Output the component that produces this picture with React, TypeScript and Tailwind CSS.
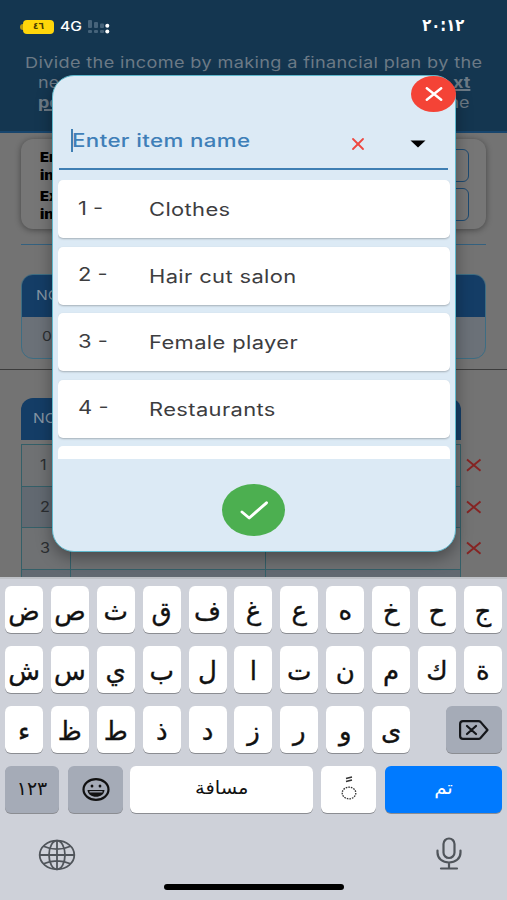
import { X } from 'lucide-react';

const ITEMS = ['Clothes', 'Hair cut salon', 'Female player', 'Restaurants'];

const KEY_ROWS = [
  ['ض', 'ص', 'ث', 'ق', 'ف', 'غ', 'ع', 'ه', 'خ', 'ح', 'ج'],
  ['ش', 'س', 'ي', 'ب', 'ل', 'ا', 'ت', 'ن', 'م', 'ك', 'ة'],
];
const LAST_ROW = ['ء', 'ظ', 'ط', 'ذ', 'د', 'ز', 'ر', 'و', 'ى'];

function StatusBar() {
  return (
    <div className="flex h-[53px] items-start justify-between pl-5 pr-[43px] pt-[19px] text-white">
      <div className="flex h-4 items-center">
        <span className="h-1.5 w-[3px] rounded-l-full bg-[#b79a10]" />
        <span className="flex h-[14px] w-[31px] items-center justify-center rounded bg-[#ffd60a] font-['DejaVu_Sans',sans-serif] text-[9px] font-bold text-[#4a3c00]">
          ٤٦
        </span>
        <span className="ml-[6px] w-[22px] origin-left scale-x-[1.2] text-[13px] font-medium">4G</span>
        <svg className="ml-[6px]" width="22" height="14" viewBox="0 0 22 14">
          <g fill="#46637a">
            <rect x="0" y="0" width="4" height="8" rx="1" />
            <rect x="6" y="2" width="4" height="6" rx="1" />
            <rect x="12" y="3.500" width="4" height="4.500" rx="1" />
            <rect x="0" y="10" width="4" height="3" rx="1" />
            <rect x="6" y="10" width="4" height="3" rx="1" />
            <rect x="12" y="10" width="4" height="3" rx="1" />
          </g>
          <g fill="#fff">
            <circle cx="19.300" cy="5.800" r="2" />
            <circle cx="19.300" cy="11.500" r="2" />
          </g>
        </svg>
      </div>
      <span className="origin-right scale-x-[0.87] font-['DejaVu_Sans',sans-serif] text-[17px] font-bold leading-[13px]">
        ٢٠:١٢
      </span>
    </div>
  );
}

function Budget() {
  return (
    <div className="h-[577px] overflow-hidden bg-[#737373]">
      <header className="h-[133px] border-b-2 border-[#17456d] bg-[#143650]">
        <StatusBar />
        <div className="text-[15px] leading-5 text-[#6c7a86]">
          <p className="ml-[25px] w-max origin-left scale-x-[1.207] tracking-[0.3px]">
            Divide the income by making a financial plan by the
          </p>
          <div className="flex justify-between pl-[38px] pr-[37px]">
            <span className="origin-left scale-x-[1.2]">ne</span>
            <span className="origin-right scale-x-[1.2] font-bold underline decoration-2">xt</span>
          </div>
          <div className="flex justify-between pl-[38px] pr-[37px]">
            <span className="origin-left scale-x-[1.2] font-bold underline decoration-2">pe</span>
            <span className="origin-right scale-x-[1.2]">ne</span>
          </div>
        </div>
      </header>

      <section className="mx-[21px] mt-[6px] flex h-[90px] justify-between rounded-xl bg-[#767676] pl-[19px] pr-[17px] pt-[9px] shadow-[0_1px_6px_rgba(0,0,0,0.4)]">
        <div className="origin-left scale-x-[1.12] text-[13px] font-black leading-[18px] text-black">
          <p>En</p>
          <p>in</p>
          <p className="mt-[3px]">Ex</p>
          <p>in</p>
        </div>
        <div className="flex flex-col gap-[6px] pt-px">
          <div className="h-[33px] w-20 rounded-[6px] border border-[#1d4a70]" />
          <div className="h-[33px] w-20 rounded-[6px] border border-[#1d4a70]" />
        </div>
      </section>

      <div className="mx-[21px] mt-[15px] h-px bg-[#34617f]" />

      <section className="mx-[21px] mt-[29px] h-[85px] overflow-hidden rounded-xl border border-[#3d6d83] bg-[#6b7178] text-[13px]">
        <div className="h-[42px] bg-[#143d66] pl-[14px] leading-[41px] text-[#8494a3]">
          <span className="inline-block origin-left scale-x-[1.2]">NO</span>
        </div>
        <p className="pl-[20px] leading-[39px] text-[#2b2e31]">
          <span className="inline-block origin-left scale-x-[1.2]">0</span>
        </p>
      </section>

      <div className="mt-[10px] h-px bg-[#3c3c3c]" />

      <div className="flex">
        <section className="ml-[21px] mt-[28px] w-[440px] text-[14px]">
          <div className="h-[42px] rounded-t-xl bg-[#143d66] pl-[12px] text-[13px] leading-[41px] text-[#8494a3]">
            <span className="inline-block origin-left scale-x-[1.2]">NO</span>
          </div>
          <div className="mt-1 border-x border-t border-[#345f68]">
            {['1', '2', '3', ''].map((n, i) => (
              <div
                key={i}
                className={`grid h-[41.5px] grid-cols-[49px_195px_1fr] divide-x divide-[#345f68] border-b border-[#345f68] ${
                  i % 2 ? 'bg-[#626971]' : 'bg-[#6f7173]'
                }`}
              >
                <span className="pl-[18px] leading-[40px] text-[#2b2e31]">
                  <span className="inline-block origin-left scale-x-[1.16]">{n}</span>
                </span>
                <span />
                <span />
              </div>
            ))}
          </div>
        </section>
        <div className="ml-[4px] mt-[86px] flex flex-col gap-[23.5px] text-[#862423]">
          {[1, 2, 3].map(n => (
            <svg key={n} width="18" height="18" viewBox="0 0 18 18" fill="none" stroke="currentColor" strokeWidth="1.900">
              <path d="M2 3.500 15.500 14.700M15.500 3.500 2 14.700" />
            </svg>
          ))}
        </div>
      </div>
    </div>
  );
}

function ItemDialog() {
  return (
    <div className="absolute left-[52px] top-[75px] flex h-[477px] w-[404px] flex-col rounded-[22px] border border-[#5fb8cc] bg-[#dceaf5] px-[5px] shadow-[0_6px_16px_rgba(0,0,0,0.35)]">
      <button className="absolute -right-px top-0 flex h-[36px] w-[45px] items-center justify-center rounded-[50%] bg-[#f44336] text-white">
        <svg width="18" height="14" viewBox="0 0 18 14" fill="none" stroke="currentColor" strokeWidth="2.400" strokeLinecap="round">
          <path d="M1.800 1.200 16.200 12.800M16.200 1.200 1.800 12.800" />
        </svg>
      </button>

      <div className="ml-px mr-[2px] flex h-[94px] items-center border-b-2 border-[#3f7fb3] pl-[12px] pt-[37px]">
        <span className="h-[23px] w-[2px] bg-[#3f7fb3]" />
        <span className="w-[275px] whitespace-nowrap">
          <span className="-ml-px inline-block origin-left scale-x-[1.24] text-[18px] font-medium tracking-[0.3px] text-[#3f7fb8]">
            Enter item name
          </span>
        </span>
        <X className="mt-[7px] h-[20px] w-[20px] text-[#ee4840]" strokeWidth={2.2} />
        <svg className="ml-[42px] mt-[7px]" width="16" height="8" viewBox="0 0 16 8">
          <path d="M.5 .5h15L8 7.500z" />
        </svg>
      </div>

      <div className="mt-[10px] flex h-[279px] flex-col gap-[8.5px] overflow-hidden">
        {ITEMS.map((item, i) => (
          <div
            key={item}
            className="flex h-[58px] shrink-0 items-center rounded-[5px] bg-white pl-5 text-[18px] text-[#3d3d3f] shadow-[0_1px_2px_rgba(0,0,0,0.25)]"
          >
            <span className="w-[71px] pb-[2px]">
              <span className="inline-block origin-left scale-x-[1.22]">{i + 1} -</span>
            </span>
            <span className="inline-block origin-left scale-x-[1.218] pt-px tracking-[0.3px]">{item}</span>
          </div>
        ))}
        <div className="h-[58px] shrink-0 rounded-[5px] bg-white" />
      </div>

      <button className="ml-[164px] mt-[25px] flex h-[52px] w-[63px] items-center justify-center rounded-[50%] bg-[#4caf50] text-white">
        <svg width="30" height="20" viewBox="0 0 30 20" fill="none" stroke="currentColor" strokeWidth="2.900" strokeLinecap="round" strokeLinejoin="round">
          <path d="M3 12 10.200 18 27.500 2.800" />
        </svg>
      </button>
    </div>
  );
}

function Key({ label }: { label: string }) {
  return (
    <button className="flex h-[47px] w-[38px] items-center justify-center rounded-[6px] bg-white pt-[2px] font-['DejaVu_Sans',sans-serif] text-[26px] leading-none text-[#111] shadow-[0_1px_0_#8b8d92] [-webkit-text-stroke:0.35px_#111]">
      {label}
    </button>
  );
}

function Keyboard() {
  return (
    <div className="h-[323px] border-t-2 border-[#bfc2c7] bg-[#ced1d9] px-[5px] pt-[7px]">
      <div className="flex flex-col gap-[13px]">
        {KEY_ROWS.map((row, i) => (
          <div key={i} className="flex justify-between">
            {row.map(k => <Key key={k} label={k} />)}
          </div>
        ))}
        <div className="flex justify-between">
          <div className="flex gap-[7.900px]">
            {LAST_ROW.map(k => <Key key={k} label={k} />)}
          </div>
          <button className="flex h-[47px] w-[56px] items-center justify-center rounded-[6px] bg-[#a5abb7] text-[#15171b] shadow-[0_1px_0_#8b8d92]">
            <svg width="30" height="20" viewBox="0 0 30 20" fill="none" stroke="currentColor" strokeWidth="2.200" strokeLinecap="round" strokeLinejoin="round">
              <path d="M4 1.100h15.500q1.200 0 2 .8L28.500 10l-7 8q-.8.900-2 .9H4q-2.900 0-2.900-2.900V4q0-2.900 2.900-2.900zM8 6l9 8M17 6l-9 8" />
            </svg>
          </button>
        </div>
        <div className="flex font-['DejaVu_Sans',sans-serif] text-[18px] text-[#111]">
          <button className="flex h-[47px] w-[54px] items-center justify-center rounded-[6px] bg-[#a5abb7] pb-[3px] text-[19px] shadow-[0_1px_0_#8b8d92]">
            ١٢٣
          </button>
          <button className="ml-[9px] flex h-[47px] w-[55px] items-center justify-center rounded-[6px] bg-[#a5abb7] shadow-[0_1px_0_#8b8d92]">
            <svg width="28" height="24" viewBox="0 0 28 24" fill="none" stroke="#111" strokeWidth="2.200">
              <ellipse cx="14" cy="11.500" rx="12.500" ry="10.300" />
              <path d="M5.500 12h17c-.5 4.500-4 6.800-8.500 6.800S6 16.500 5.500 12z" fill="#111" stroke="none" />
              <path d="M7.500 13.800h13" stroke="#a5abb7" strokeWidth="1.300" />
              <ellipse cx="10" cy="8" rx="1.400" ry="1.600" fill="#111" stroke="none" />
              <ellipse cx="18" cy="8" rx="1.400" ry="1.600" fill="#111" stroke="none" />
            </svg>
          </button>
          <button className="ml-[7px] flex h-[47px] w-[183px] items-center justify-center rounded-[6px] bg-white pb-1 shadow-[0_1px_0_#8b8d92]">
            <span className="scale-x-[1.08]">مسافة</span>
          </button>
          <button className="ml-[8px] flex h-[47px] w-[55px] items-center justify-center rounded-[6px] bg-white pb-[3px] shadow-[0_1px_0_#8b8d92]">
            <svg width="18" height="26" viewBox="0 0 18 26" fill="none" stroke="#333">
              <path d="M6 3.500 12 2M6 6.500 12 5" strokeWidth="1.600" />
              <ellipse cx="9" cy="18" rx="6.800" ry="5.800" strokeWidth="1.300" strokeDasharray="1.600 1" />
            </svg>
          </button>
          <button className="ml-[9px] flex h-[47px] w-[117px] items-center justify-center rounded-[6px] bg-[#007aff] pb-1 text-white shadow-[0_1px_0_#8b8d92]">
            <span className="scale-x-[1.1]">تم</span>
          </button>
        </div>
      </div>

      <div className="flex justify-between pl-[33px] pr-[39px] pt-[24px] text-[#50555b]">
        <svg className="mt-[2px]" width="38" height="32" viewBox="0 0 38 32" fill="none" stroke="currentColor" strokeWidth="1.800">
          <ellipse cx="19" cy="16" rx="17.300" ry="14.300" />
          <ellipse cx="19" cy="16" rx="8" ry="14.300" />
          <path d="M19 1.700v28.600M1.700 16h34.600M5.500 7.200q13.500 6 27 0M5.500 24.800q13.500-6 27 0" />
        </svg>
        <svg width="28" height="34" viewBox="0 0 28 34" fill="none" stroke="currentColor" strokeWidth="2.200" strokeLinecap="round">
          <rect x="8.500" y="1.500" width="11" height="19.500" rx="5.500" />
          <path d="M2.500 13.500v2c0 6 5 10 11.500 10s11.500-4 11.500-10v-2M14 25.500v6M6 31.500h16" />
        </svg>
      </div>
      <div className="ml-[159px] mt-[13px] h-[6px] w-[180px] rounded-full bg-black" />
    </div>
  );
}

export default function App() {
  return (
    <div className="relative h-[900px] w-[507px] overflow-hidden font-['Inter',sans-serif]">
      <Budget />
      <ItemDialog />
      <Keyboard />
    </div>
  );
}
